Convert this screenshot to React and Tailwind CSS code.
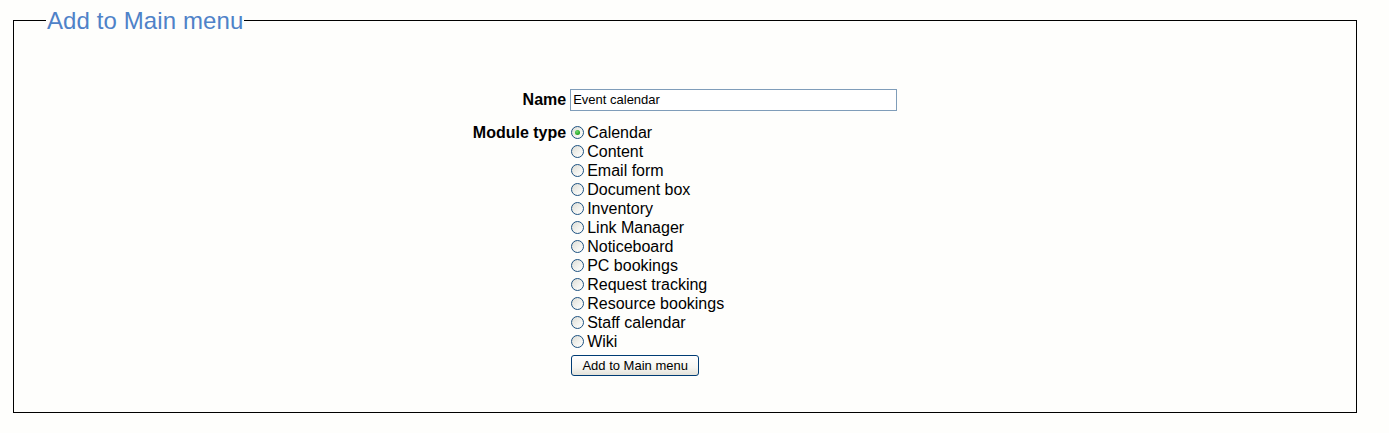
import React from "react";

const options = [
  "Calendar",
  "Content",
  "Email form",
  "Document box",
  "Inventory",
  "Link Manager",
  "Noticeboard",
  "PC bookings",
  "Request tracking",
  "Resource bookings",
  "Staff calendar",
  "Wiki",
];

function Radio({ checked }) {
  return (
    <span className="relative inline-block w-[13px] h-[13px] rounded-full border border-[#1c5180] bg-[linear-gradient(135deg,#dcdcd5_0%,#f4f4f0_60%,#ffffff_100%)] shrink-0">
      {checked && (
        <span className="absolute left-[3px] top-[3px] w-[5px] h-[5px] rounded-full bg-[radial-gradient(circle_at_40%_35%,#6fdc6f_0%,#21a121_70%,#1a8a1a_100%)]" />
      )}
    </span>
  );
}

export default function App() {
  return (
    <div
      className="min-h-[433px] bg-[#fefefc] pt-[7px] text-black"
      style={{ fontFamily: '"Liberation Sans", Arial, sans-serif' }}
    >
      <fieldset className="ml-[13px] w-[1344px] border border-black pb-[35px]">
        <legend className="ml-[32px] px-[1px] text-[24px] leading-[27px] text-[#4f82c8] tracking-[0.1px]">
          Add to Main menu
        </legend>
        <div className="pt-[55px] flex justify-center">
          <div className="grid grid-cols-[auto_auto] gap-x-[4px]">
            <div className="flex items-center justify-end text-[16px] font-bold h-[22px] pr-0">
              Name
            </div>
            <div className="w-[327px] h-[22px] border border-[#7f9db9] bg-white flex items-center pl-[2px] text-[13px]">
              Event calendar
            </div>

            <div className="mt-[12px] text-right text-[16px] font-bold leading-[19px]">
              Module type
            </div>
            <div className="mt-[12px] flex flex-col">
              {options.map((o, i) => (
                <label
                  key={o}
                  className="flex items-center h-[19px] text-[16px] leading-[19px]"
                >
                  <span className="ml-[1px] mr-[3px] flex">
                    <Radio checked={i === 0} />
                  </span>
                  {o}
                </label>
              ))}
              <div className="mt-[2px] ml-[1px]">
                <button className="w-[128px] h-[21px] rounded-[3px] border border-[#003c74] bg-[linear-gradient(180deg,#ffffff_0%,#f6f6f2_60%,#e3e2da_100%)] text-[13px] leading-[19px] text-black">
                  Add to Main menu
                </button>
              </div>
            </div>
          </div>
        </div>
      </fieldset>
    </div>
  );
}
